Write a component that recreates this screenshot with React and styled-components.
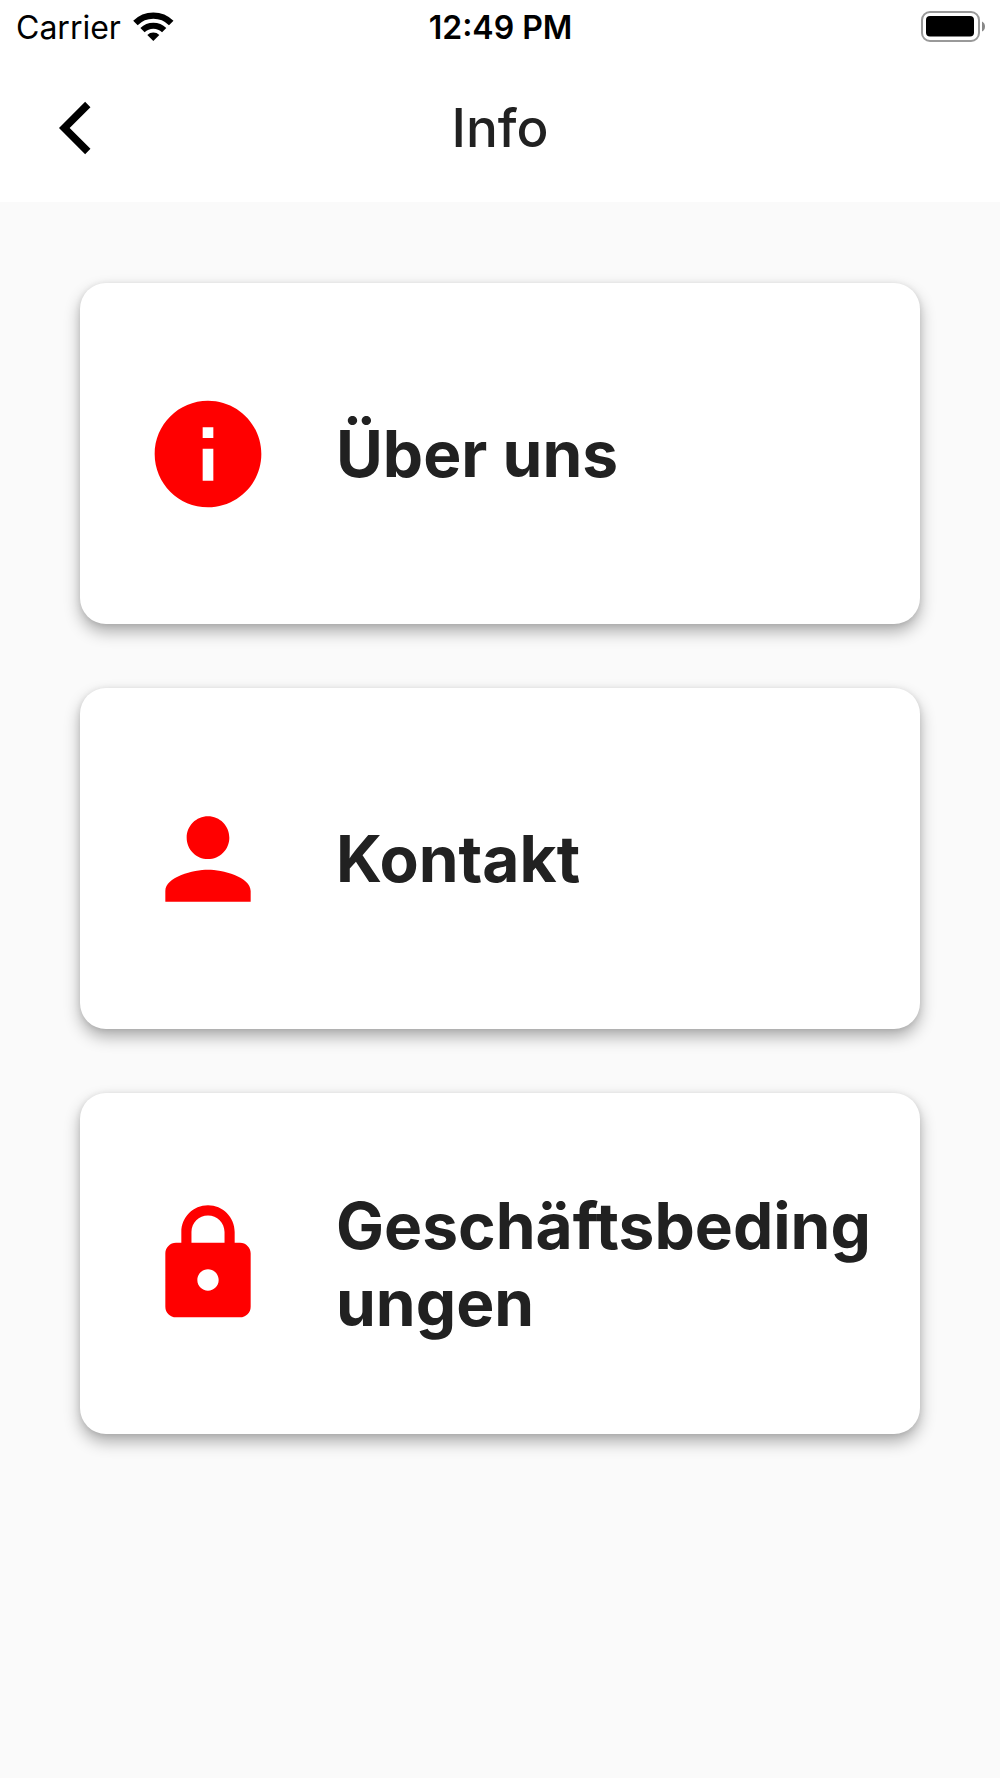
import React from 'react'
import styled, { createGlobalStyle } from 'styled-components'
import { MdInfo, MdLock, MdPerson } from 'react-icons/md'

const GlobalStyle = createGlobalStyle`
  * {
    box-sizing: border-box;
  }
  body {
    margin: 0;
    background-color: #fafafa;
    font-family: Inter, Roboto, sans-serif;
  }
`

const Page = styled.div`
  min-height: 100vh;
  background-color: #fafafa;
`

const Top = styled.header`
  background-color: white;
`

const StatusBar = styled.div`
  display: grid;
  grid-template-columns: 1fr auto 1fr;
  align-items: center;
  height: 54px;
  padding: 0 15px 0 16px;
  font-size: 32px;
  color: black;
`

const Carrier = styled.div`
  display: flex;
  align-items: center;
  gap: 12px;
`

const Time = styled.div`
  font-weight: 600;
`

const Battery = styled.svg`
  justify-self: end;
`

const AppBar = styled.div`
  display: grid;
  grid-template-columns: 1fr auto 1fr;
  align-items: center;
  height: 148px;
  padding: 0 43px;
`

const BackButton = styled.button`
  display: flex;
  justify-self: start;
  padding: 0;
  border: none;
  background: none;
  cursor: pointer;
`

const Title = styled.h1`
  margin: 0;
  font-size: 53px;
  font-weight: 500;
  color: #212121;
`

const Menu = styled.main`
  display: flex;
  flex-direction: column;
  gap: 64px;
  padding: 81px 80px;
`

const Card = styled.button`
  display: flex;
  align-items: center;
  gap: 64px;
  width: 100%;
  min-height: 341px;
  padding: 64px 26px 64px 64px;
  border: none;
  border-radius: 26px;
  background-color: white;
  box-shadow: 0 8px 16px rgba(0, 0, 0, 0.3), 0 1px 6px rgba(0, 0, 0, 0.1);
  font-family: inherit;
  text-align: left;
  cursor: pointer;
`

const CardIcon = styled.span`
  display: flex;
  flex-shrink: 0;
  font-size: 128px;
  color: #ff0000;
`

const CardLabel = styled.span`
  flex: 1;
  min-width: 0;
  font-size: 64px;
  font-weight: 700;
  line-height: 77px;
  color: #212121;
  overflow-wrap: anywhere;
`

const BackIcon = () => (
  <svg width="64" height="64" viewBox="0 0 24 24" aria-hidden="true">
    <path d="M6 12L15.8 2.200L17.8 4.200L10 12L17.8 19.800L15.8 21.800Z" />
  </svg>
)

const WifiIcon = () => (
  <svg width="41" height="30" viewBox="0 0 123 90" fill="none" stroke="black" aria-hidden="true">
    <path d="M7.3 33.3A76 76 0 0 1 114.7 33.3" strokeWidth="19" />
    <path d="M28.5 54.5A46 46 0 0 1 93.5 54.5" strokeWidth="18" />
    <path d="M61 87L43 69A26 26 0 0 1 79 69Z" fill="black" stroke="none" />
  </svg>
)

const BatteryIcon = () => (
  <Battery width="64" height="32" viewBox="0 0 64 32" aria-hidden="true">
    <rect x="1" y="1" width="57" height="29" rx="8" fill="none" stroke="#999" strokeWidth="2" />
    <rect x="5" y="5" width="48" height="20.500" rx="4" fill="black" />
    <path d="M61 10.500Q64 12 64 15.500T61 20.500Z" fill="#888" />
  </Battery>
)

const items = [
  { label: 'Über uns', Icon: MdInfo },
  { label: 'Kontakt', Icon: MdPerson },
  { label: 'Geschäftsbedingungen', Icon: MdLock },
]

const App = () => {
  return (
    <Page>
      <GlobalStyle />
      <Top>
        <StatusBar>
          <Carrier>
            Carrier
            <WifiIcon />
          </Carrier>
          <Time>12:49 PM</Time>
          <BatteryIcon />
        </StatusBar>
        <AppBar>
          <BackButton type="button" aria-label="Zurück">
            <BackIcon />
          </BackButton>
          <Title>Info</Title>
        </AppBar>
      </Top>
      <Menu>
        {items.map(({ label, Icon }) => (
          <Card type="button" key={label}>
            <CardIcon>
              <Icon />
            </CardIcon>
            <CardLabel>{label}</CardLabel>
          </Card>
        ))}
      </Menu>
    </Page>
  )
}

export default App
